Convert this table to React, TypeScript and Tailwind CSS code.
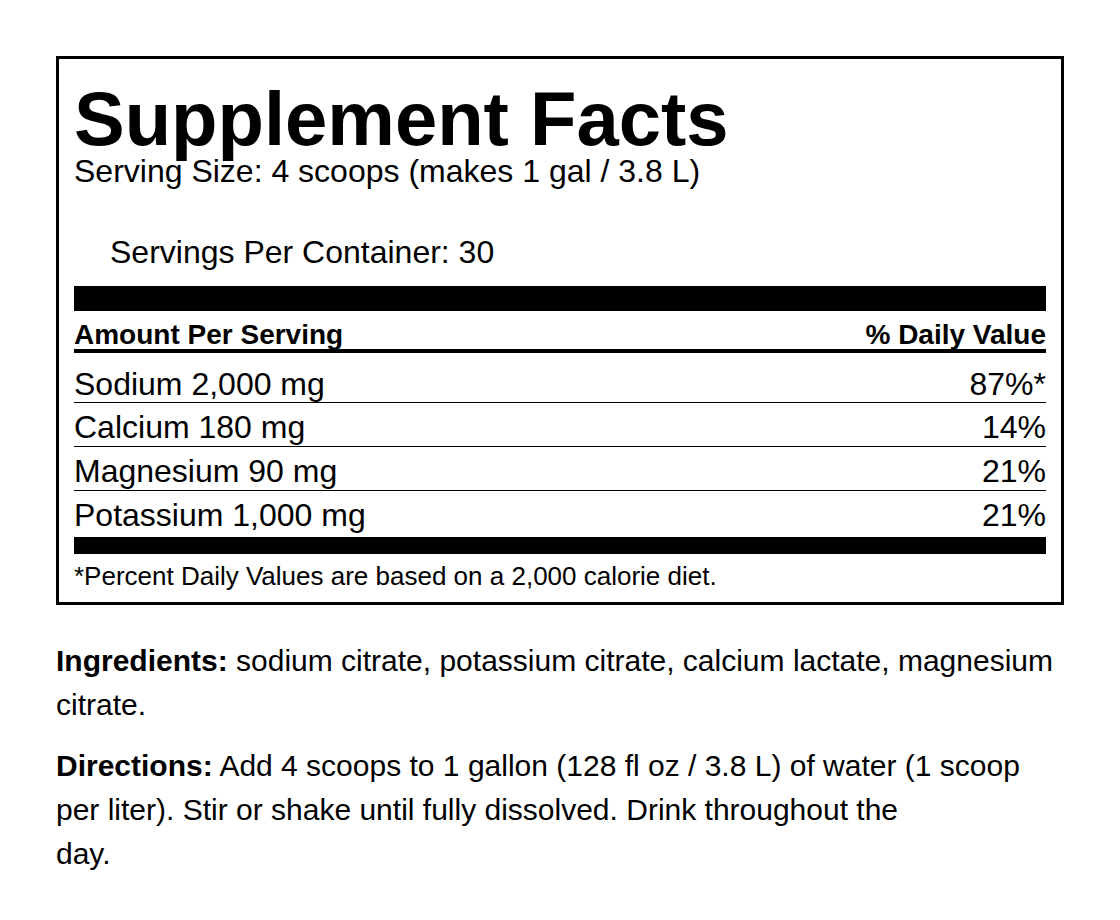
import React from "react";

const rows = [
  { name: "Sodium 2,000 mg", dv: "87%*" },
  { name: "Calcium 180 mg", dv: "14%" },
  { name: "Magnesium 90 mg", dv: "21%" },
  { name: "Potassium 1,000 mg", dv: "21%" },
];

export default function App() {
  return (
    <div className="w-[1120px] h-[920px] bg-white px-14 pt-14 text-black font-['Liberation_Sans',Arial,sans-serif]">
      <div className="border-[3px] border-black px-[15px] pt-[28px] pb-[13px]">
        <h1 className="text-[76px] leading-[64px] font-bold">Supplement Facts</h1>
        <div className="mt-[4px] text-[32px] leading-[32px]">Serving Size: 4 scoops (makes 1 gal / 3.8 L)</div>
        <div className="mt-[49px] ml-[36px] text-[32px] leading-[32px]">Servings Per Container: 30</div>
        <div className="mt-[18px] h-[25px] bg-black" />
        <div className="flex justify-between pt-[10px] border-b-4 border-black text-[28px] leading-[28px] font-bold">
          <span>Amount Per Serving</span>
          <span>% Daily Value</span>
        </div>
        {rows.map((r, i) => (
          <div
            key={r.name}
            className={
              "flex justify-between text-[32px] leading-[32px] " +
              (i === 0
                ? "pt-[15px] pb-[2px] border-b border-black"
                : i === rows.length - 1
                ? "pt-[8px] pb-[6px]"
                : "pt-[8px] pb-[3px] border-b border-black")
            }
          >
            <span>{r.name}</span>
            <span>{r.dv}</span>
          </div>
        ))}
        <div className="h-[17px] bg-black" />
        <div className="mt-[9px] text-[26px] leading-[26px]">
          *Percent Daily Values are based on a 2,000 calorie diet.
        </div>
      </div>
      <p className="mt-[34px] text-[30px] leading-[44px]">
        <b>Ingredients:</b> sodium citrate, potassium citrate, calcium lactate, magnesium
        <br />
        citrate.
      </p>
      <p className="mt-[17px] text-[30px] leading-[44px]">
        <b>Directions:</b> Add 4 scoops to 1 gallon (128 fl oz / 3.8 L) of water (1 scoop
        <br />
        per liter). Stir or shake until fully dissolved. Drink throughout the
        <br />
        day.
      </p>
    </div>
  );
}
